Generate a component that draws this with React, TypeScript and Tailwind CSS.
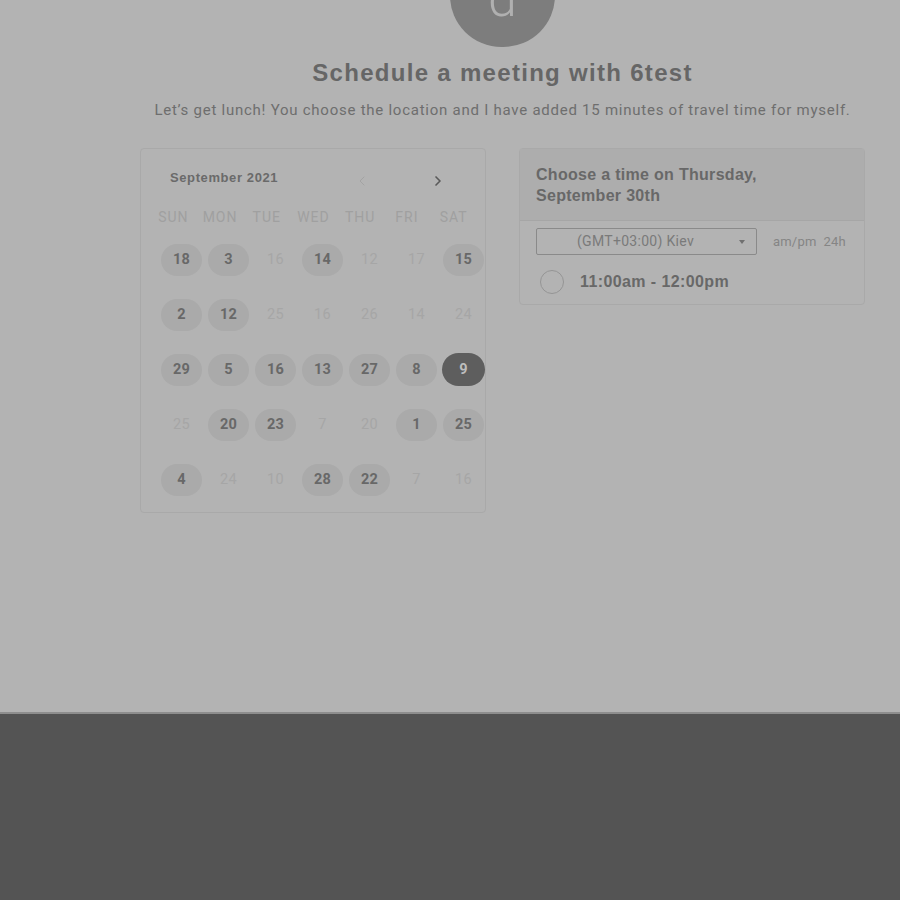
import { ChevronLeft, ChevronRight } from 'lucide-react'

type Day = { n: number; on?: boolean; sel?: boolean }

const weekdays = ['SUN', 'MON', 'TUE', 'WED', 'THU', 'FRI', 'SAT']

const rows: Day[][] = [
  [{ n: 18, on: true }, { n: 3, on: true }, { n: 16 }, { n: 14, on: true }, { n: 12 }, { n: 17 }, { n: 15, on: true }],
  [{ n: 2, on: true }, { n: 12, on: true }, { n: 25 }, { n: 16 }, { n: 26 }, { n: 14 }, { n: 24 }],
  [{ n: 29, on: true }, { n: 5, on: true }, { n: 16, on: true }, { n: 13, on: true }, { n: 27, on: true }, { n: 8, on: true }, { n: 9, sel: true }],
  [{ n: 25 }, { n: 20, on: true }, { n: 23, on: true }, { n: 7 }, { n: 20 }, { n: 1, on: true }, { n: 25, on: true }],
  [{ n: 4, on: true }, { n: 24 }, { n: 10 }, { n: 28, on: true }, { n: 22, on: true }, { n: 7 }, { n: 16 }],
]

function DayCell({ day }: { day: Day }) {
  if (day.sel) {
    return (
      <div className="flex h-[55px] items-center justify-center">
        <div className="flex h-[33px] w-[43px] items-center justify-center rounded-full bg-[#5e5e5e] text-[14.5px] font-bold text-[#bdbdbd]">
          {day.n}
        </div>
      </div>
    )
  }
  if (day.on) {
    return (
      <div className="flex h-[55px] items-center justify-center">
        <div className="flex h-[32px] w-[41px] items-center justify-center rounded-full bg-[#aaaaaa] text-[14.5px] font-bold tracking-[0.3px] text-[#686868]">
          {day.n}
        </div>
      </div>
    )
  }
  return (
    <div className="flex h-[55px] items-center justify-center text-[14.5px] tracking-[0.3px] text-[#a6a6a6]">{day.n}</div>
  )
}

export default function App() {
  return (
    <div className="flex min-h-screen w-full flex-col bg-[#b3b3b3] font-['Roboto',sans-serif]">
      <div className="h-[712px] w-full overflow-hidden">
        <div className="ml-[140px] flex w-[725px] flex-col items-center">
          {/* Avatar */}
          <div className="mt-[-56px] flex h-[103px] w-[105px] items-center justify-center rounded-full bg-[#7d7d7d]">
            <span className="mt-[6px] text-[52px] leading-none font-light text-[#b0b0b0]">d</span>
          </div>

          <h1 className="mt-[11px] font-['Liberation_Sans',sans-serif] text-[24px] leading-[30px] font-bold tracking-[1.3px] text-[#666666]">
            Schedule a meeting with 6test
          </h1>
          <p className="mt-[12px] text-[15px] leading-[20px] tracking-[0.75px] text-[#6e6e6e]">
            Let’s get lunch! You choose the location and I have added 15 minutes of travel time for myself.
          </p>

          <div className="mt-[28px] flex w-full items-start gap-[33px]">
            {/* Calendar */}
            <div className="h-[365px] w-[346px] rounded-sm border border-[#a9a9a9] pt-[20px]">
              <div className="flex h-[18px] items-center">
                <span className="ml-[29px] font-['Liberation_Sans',sans-serif] text-[13px] font-bold tracking-[0.6px] text-[#6a6a6a]">
                  September 2021
                </span>
                <ChevronLeft className="ml-[76px] mt-[6px] h-[16px] w-[16px] text-[#a3a3a3]" strokeWidth={1.5} />
                <ChevronRight className="ml-[60px] mt-[6px] h-[16px] w-[16px] text-[#5a5a5a]" strokeWidth={2.5} />
              </div>

              <div className="mt-[20px] ml-[9px] grid w-[327px] grid-cols-7">
                {weekdays.map((w) => (
                  <div key={w} className="flex h-[20px] items-center justify-center text-[14px] tracking-[1px] text-[#a0a0a0]">
                    {w}
                  </div>
                ))}
              </div>

              <div className="mt-[5px] ml-[17px] grid w-[329px] grid-cols-7">
                {rows.flat().map((d, i) => (
                  <DayCell key={i} day={d} />
                ))}
              </div>
            </div>

            {/* Time picker */}
            <div className="w-[346px] rounded-sm border border-[#a9a9a9] pb-[10px]">
              <div className="h-[72px] border-b border-[#a6a6a6] bg-[#adadad] pt-[15px] pl-[16px]">
                <div className="font-['Liberation_Sans',sans-serif] text-[16px] leading-[21px] font-bold tracking-[0.3px] text-[#686868]">
                  Choose a time on Thursday,
                  <br />
                  September 30th
                </div>
              </div>

              <div className="mt-[7px] ml-[16px] flex items-center">
                <div className="relative flex h-[27px] w-[221px] items-center justify-center rounded-[2px] border border-[#8a8a8a] text-[14px] tracking-[0.3px] text-[#7a7a7a]">
                  <span className="mr-[22px]">(GMT+03:00) Kiev</span>
                  <span className="absolute right-[11px] top-[11px] h-0 w-0 border-x-[3.5px] border-t-[4px] border-x-transparent border-t-[#707070]" />
                </div>
                <span className="ml-[16px] text-[13px] tracking-[0.2px] text-[#858585]">am/pm&nbsp;&nbsp;24h</span>
              </div>

              <div className="mt-[15px] ml-[20px] flex items-center">
                <div className="h-[24px] w-[24px] rounded-full border border-[#959595]" />
                <span className="ml-[16px] font-['Liberation_Sans',sans-serif] text-[16px] font-bold tracking-[0.4px] text-[#686868]">
                  11:00am - 12:00pm
                </span>
              </div>
            </div>
          </div>
        </div>
      </div>

      {/* Footer */}
      <div className="flex-1 border-t-2 border-[#8e8e8e] bg-[#545454]" />
    </div>
  )
}
